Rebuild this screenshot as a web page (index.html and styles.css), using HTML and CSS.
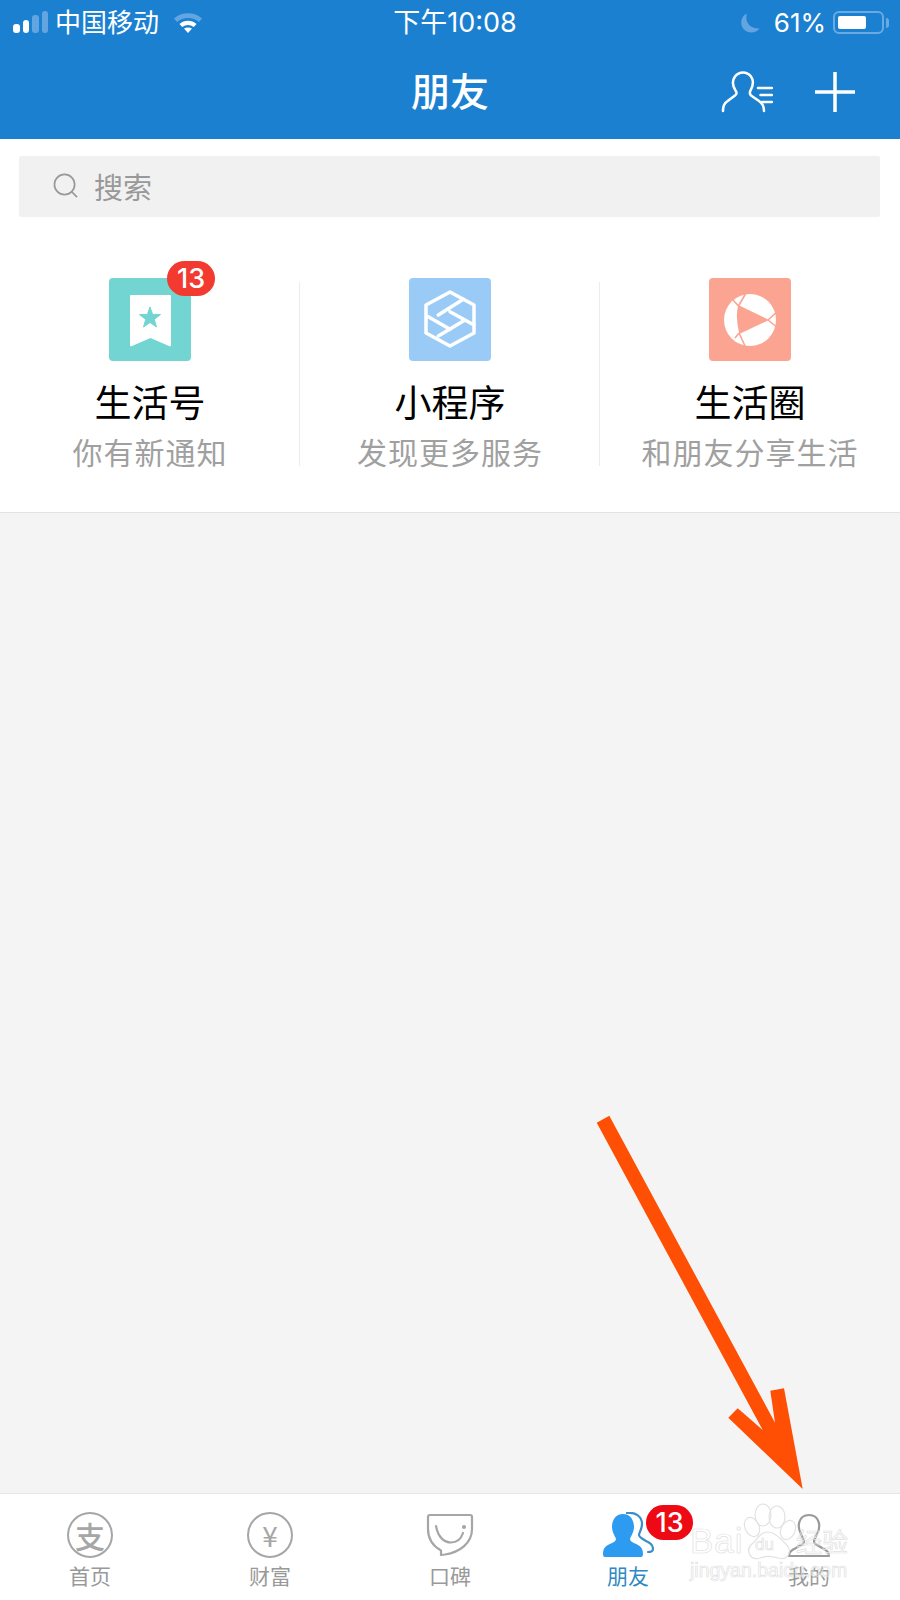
FILE: index.html
```html
<!DOCTYPE html>
<html lang="zh-CN">
<head>
    <meta charset="UTF-8">
    <meta name="viewport" content="width=device-width, initial-scale=1.0">
    <title>朋友</title>
    <link rel="stylesheet" href="styles.css">
</head>
<body>
    <div class="phone">
        <header class="top">
            <div class="status">
                <div class="status-left">
                    <div class="signal">
                        <i class="bar bar1"></i><i class="bar bar2"></i><i class="bar bar3 dim"></i><i class="bar bar4 dim"></i>
                    </div>
                    <span class="carrier">中国移动</span>
                    <svg class="wifi" width="30" height="22" viewBox="0 0 30 22">
                        <path d="M1 7.5C8.5 .5 21.5 .5 29 7.5L26 11C20 5.5 10 5.5 4 11Z" fill="#62a5e0"/>
                        <path d="M6.5 13C11.5 8.8 18.5 8.8 23.5 13L20.8 16C17.2 13.3 12.8 13.3 9.200 16Z" fill="#fff"/>
                        <path d="M11 17.500C13.200 16 16.800 16 19 17.500L15 22Z" fill="#fff"/>
                    </svg>
                </div>
                <div class="clock">下午10:08</div>
                <div class="status-right">
                    <svg class="moon" width="20" height="20" viewBox="0 0 20 20">
                        <path d="M7 .5C4.500 8 9 16 19.500 15.500C16 20.500 8 21 3.500 16C-.5 11 1 3 7 .5Z" fill="#62a5e0"/>
                    </svg>
                    <span class="percent">61%</span>
                    <div class="battery"><div class="battery-level"></div></div>
                    <i class="battery-nub"></i>
                </div>
            </div>
            <div class="navbar">
                <h1>朋友</h1>
                <div class="nav-actions">
                    <svg width="52" height="44" viewBox="0 0 52 44" fill="none" stroke="#fff" stroke-width="2.500" stroke-linecap="round" stroke-linejoin="round">
                        <path d="M2 41C2 36 3 33.500 6 31.500L14 25.500C16 24 16 22.500 14.500 20.500C11 15 11.500 10 14 6.500C18 1 26 1 30 6.500C32.500 10 32.500 15 29.500 20.500C28.500 22.500 28.500 24 30 25.500L38 31C41 33 43 37 43 41"/>
                        <path d="M37 18H51M39.500 25H51M41 32H51"/>
                    </svg>
                    <svg width="40" height="40" viewBox="0 0 40 40" stroke="#fff" stroke-width="3.500">
                        <path d="M0 20H40M20 0V40"/>
                    </svg>
                </div>
            </div>
        </header>

        <div class="search-wrap">
            <div class="search">
                <svg width="25" height="25" viewBox="0 0 26 26" fill="none" stroke="#999" stroke-width="1.800">
                    <circle cx="12" cy="12" r="10.500"/>
                    <path d="M19.500 19.500L25 25"/>
                </svg>
                <span>搜索</span>
            </div>
        </div>

        <section class="shortcuts">
            <div class="shortcut">
                <div class="tile tile-green">
                    <svg width="82" height="83" viewBox="0 0 82 83">
                        <path d="M21 18Q21 17 22 17H61Q62 17 62 18V67Q62 69 60 68L41.500 60L23 68Q21 69 21 67Z" fill="#fff"/>
                        <path d="M41 29L43.600 36.400L51.500 36.600L45.300 41.400L47.500 49L41 44.500L34.500 49L36.700 41.400L30.500 36.600L38.400 36.400Z" fill="#72d5d1" stroke="#72d5d1" stroke-linejoin="round"/>
                    </svg>
                    <span class="badge">13</span>
                </div>
                <div class="shortcut-title">生活号</div>
                <div class="shortcut-sub">你有新通知</div>
            </div>
            <div class="shortcut">
                <div class="tile tile-blue">
                    <svg width="82" height="83" viewBox="0 0 82 83" fill="none" stroke="#fff" stroke-width="3.500" stroke-linejoin="round" stroke-linecap="round">
                        <path d="M41 14L65 27V55L41 68L17 55V27Z"/>
                        <path d="M54.300 21.300L29.300 37M41 33.700L65 47M19.300 38.700L41 51.300M56 42L29.300 58"/>
                    </svg>
                </div>
                <div class="shortcut-title">小程序</div>
                <div class="shortcut-sub">发现更多服务</div>
            </div>
            <div class="shortcut">
                <div class="tile tile-coral">
                    <svg width="82" height="83" viewBox="0 0 82 83">
                        <circle cx="41" cy="42" r="26" fill="#fff"/>
                        <path d="M29.300 27L60 42L30.300 56Q26 38 29.300 27Z" fill="#fba492"/>
                        <path d="M29.500 28L37 15M29.500 28L24 22M30 55L37 70M30 55L26 60M59 42L69 33M59 42L69 50" stroke="#fba492" stroke-width="1.600" fill="none"/>
                    </svg>
                </div>
                <div class="shortcut-title">生活圈</div>
                <div class="shortcut-sub">和朋友分享生活</div>
            </div>
        </section>

        <main class="content"></main>

        <nav class="tabbar">
            <div class="tab">
                <div class="tab-icon"><span class="coin coin-zhi">支</span></div>
                <span class="tab-label">首页</span>
            </div>
            <div class="tab">
                <div class="tab-icon"><span class="coin">¥</span></div>
                <span class="tab-label">财富</span>
            </div>
            <div class="tab">
                <div class="tab-icon">
                    <svg width="48" height="44" viewBox="0 0 48 44" fill="none" stroke="#a6a6a6" stroke-width="2.200" stroke-linejoin="round" stroke-linecap="round">
                        <path d="M2 4Q2 2 4 2H44Q46 2 46 4V16C46 30 34 39 19 41.500L15 42V37.500C7 33 2 25 2 16Z"/>
                        <path d="M10 13C12 24 18 29.500 25 29.500C31 29.500 35 26 37 20"/>
                        <circle cx="38" cy="14" r="1" fill="#a6a6a6"/>
                    </svg>
                </div>
                <span class="tab-label">口碑</span>
            </div>
            <div class="tab tab-active">
                <div class="tab-icon">
                    <svg width="52" height="46" viewBox="0 0 52 46">
                        <path d="M21 2C13 2 10 9 10 15C10 20 13 24 14 27C14 29 12 30 9 31.500C4 33.500 1 36 1 42Q1 45 3 45H39Q41 45 41 42C41 36 38 33.500 33 31.500C30 30 28 29 28 27C29 24 32 20 32 15C32 9 29 2 21 2Z" fill="#2d9cf0"/>
                        <path d="M25 1C33 0 40 4 40 12C40 18 37 20 37 23C37 25 39 26 44 29C49 31 51 33 51 37Q51 40 46 40" fill="none" stroke="#3a8fc9" stroke-width="2.200" stroke-linecap="round"/>
                    </svg>
                    <span class="badge badge-tab">13</span>
                </div>
                <span class="tab-label">朋友</span>
            </div>
            <div class="tab tab-me">
                <div class="tab-icon">
                    <svg width="44" height="46" viewBox="0 0 44 46" fill="none" stroke="#9a9a9a" stroke-width="2.200" stroke-linejoin="round">
                        <path d="M17 30C17 27 15 25 14 22C10 15 11 3 22 3C33 3 34 15 30 22C29 25 27 27 27 30C27 32 30 33 35 36C40 38 42 40 42 44H2C2 40 4 38 9 36C14 33 17 32 17 30Z"/>
                    </svg>
                </div>
                <span class="tab-label">我的</span>
            </div>
        </nav>

        <svg class="arrow" width="230" height="400" viewBox="580 1100 230 400">
            <path d="M596.700 1122.700L609.300 1115.700L775 1422.700L770.300 1390.700L784 1388.300L802.700 1489L728.300 1417.700L737.700 1408.300L762.700 1430Z" fill="#fe4f04"/>
        </svg>

        <svg class="watermark" width="170" height="95" viewBox="685 1495 170 95">
            <g fill="none" stroke="#e2e2e2" stroke-width="1.200">
                <ellipse cx="763" cy="1515" rx="8" ry="11"/>
                <ellipse cx="777" cy="1517" rx="8" ry="11"/>
                <ellipse cx="752" cy="1527" rx="7" ry="10" transform="rotate(-25 752 1527)"/>
                <ellipse cx="788" cy="1530" rx="7" ry="10" transform="rotate(25 788 1530)"/>
                <path d="M768 1532C760 1532 757 1540 752 1544C745 1550 750 1561 760 1558C765 1556 772 1556 778 1558C788 1561 793 1551 786 1544C781 1540 776 1532 768 1532Z"/>
            </g>
            <g class="watermark-text">
                <text x="690" y="1553" font-size="35" letter-spacing="1">Bai</text>
                <text x="755" y="1550" font-size="17">du</text>
                <text x="796" y="1552" font-size="26">经验</text>
                <text x="690" y="1577" font-size="19.500">jingyan.baidu.com</text>
            </g>
        </svg>
    </div>
</body>
</html>
```

FILE: styles.css
```css
* {
    box-sizing: border-box;
}

body {
    margin: 0;
    padding: 0;
    font-family: "Noto Sans CJK SC", "Noto Sans", sans-serif;
    background-color: #f5f4f5;
}

.phone {
    position: relative;
    display: flex;
    flex-direction: column;
    width: 900px;
    height: 1600px;
    overflow: hidden;
}

/* top blue area */
.top {
    height: 139px;
    background: #1c80d1;
    color: #fff;
}

.status {
    display: grid;
    grid-template-columns: 1fr auto 1fr;
    align-items: center;
    height: 45px;
    padding: 0 11px 0 13px;
    font-size: 26px;
    line-height: 45px;
}

.status-left {
    display: flex;
    align-items: center;
}

.signal {
    display: flex;
    align-items: flex-end;
    gap: 3px;
    height: 22px;
    margin: -2px 7px 0 0;
}

.bar {
    width: 6.500px;
    border-radius: 3px;
    background: #fff;
}

.bar.dim {
    background: #62a5e0;
}

.bar1 { height: 9px; }
.bar2 { height: 13px; }
.bar3 { height: 18px; }
.bar4 { height: 22px; }

.carrier {
    margin-top: -4px;
}

.wifi {
    margin: -2px 0 0 14px;
}

.clock {
    margin-left: 8px;
    font-family: Inter, "Noto Sans CJK SC", sans-serif;
    font-size: 27px;
}

.status-right {
    display: flex;
    align-items: center;
    justify-content: flex-end;
    font-family: Inter, sans-serif;
}

.moon {
    margin-right: 14px;
}

.percent {
    margin-right: 7px;
}

.battery {
    width: 51px;
    height: 23px;
    padding: 3px;
    border: 2px solid #6aaae3;
    border-radius: 6px;
}

.battery-level {
    width: 28px;
    height: 100%;
    background: #fff;
    border-radius: 2px;
}

.battery-nub {
    width: 3px;
    height: 10px;
    margin-left: 2px;
    background: #6aaae3;
    border-radius: 0 3px 3px 0;
}

.navbar {
    display: flex;
    align-items: flex-start;
    justify-content: center;
    position: relative;
    height: 94px;
}

.navbar h1 {
    margin: 0;
    font-size: 39px;
    font-weight: 500;
    line-height: 88px;
}

.nav-actions {
    position: absolute;
    top: 25px;
    right: 45px;
    display: flex;
    align-items: center;
    gap: 42px;
}

/* search */
.search-wrap {
    padding: 17px 20px 0 19px;
    background: #fff;
}

.search {
    display: flex;
    align-items: center;
    gap: 16px;
    height: 61px;
    padding: 0 0 2px 34px;
    background: #f1f1f1;
    border-radius: 2px;
    color: #999;
    font-size: 29px;
}

/* three shortcuts */
.shortcuts {
    display: grid;
    grid-template-columns: repeat(3, 300px);
    height: 296px;
    padding-top: 65px;
    background: #fff;
    border-bottom: 1px solid #e4e4e4;
}

.shortcut {
    position: relative;
    display: flex;
    flex-direction: column;
    align-items: center;
    height: 184px;
}

.shortcut + .shortcut {
    border-left: 1px solid #ececec;
    margin-left: -1px;
}

.tile {
    position: relative;
    width: 82px;
    height: 83px;
    margin-top: -4px;
    border-radius: 4px;
}

.tile svg {
    display: block;
}

.tile-green { background: #72d5d1; }
.tile-blue { background: #9acbf6; }
.tile-coral { background: #fba492; }

.shortcut-title {
    margin-top: 17px;
    font-size: 37px;
    line-height: 46px;
    color: #000;
}

.shortcut-sub {
    margin-top: 5px;
    font-size: 30px;
    line-height: 44px;
    letter-spacing: 1px;
    color: #a0a0a0;
}

.badge {
    position: absolute;
    top: -17px;
    left: 58px;
    width: 48px;
    height: 35px;
    background: #f23a30;
    border-radius: 18px;
    color: #fff;
    font-family: Inter, sans-serif;
    font-size: 27px;
    font-weight: 500;
    line-height: 35px;
    text-align: center;
}

.content {
    flex: 1;
    background: #f5f4f5;
}

/* bottom tabs */
.tabbar {
    display: grid;
    grid-template-columns: repeat(5, 180px);
    height: 107px;
    padding-top: 18px;
    background: #fff;
    border-top: 1px solid #e6e6e6;
}

.tab {
    display: flex;
    flex-direction: column;
    align-items: center;
}

.tab-active {
    margin-left: -4px;
}

.tab-me {
    margin-left: -2px;
}

.tab-icon {
    position: relative;
    display: flex;
    align-items: center;
    justify-content: center;
    height: 46px;
}

.tab-icon svg {
    display: block;
}

.tab-label {
    margin-top: 2px;
    font-size: 21px;
    line-height: 30px;
    color: #999;
}

.tab-active .tab-label {
    color: #3089c4;
}

.coin {
    display: flex;
    align-items: center;
    justify-content: center;
    width: 46px;
    height: 46px;
    border: 2px solid #a6a6a6;
    border-radius: 50%;
    color: #a6a6a6;
    font-size: 28px;
    line-height: 1;
}

.coin-zhi {
    font-size: 30px;
    font-weight: 500;
}

.badge-tab {
    top: -7px;
    left: 44px;
    width: 47px;
    background: #ee0a14;
}

/* things lying over the page */
.arrow {
    position: absolute;
    left: 580px;
    top: 1100px;
}

.watermark {
    position: absolute;
    left: 685px;
    top: 1495px;
}

.watermark-text {
    fill: none;
    stroke: #e2e2e2;
    stroke-width: 0.700;
    font-family: "Liberation Sans", "Noto Sans CJK SC", sans-serif;
}
```
